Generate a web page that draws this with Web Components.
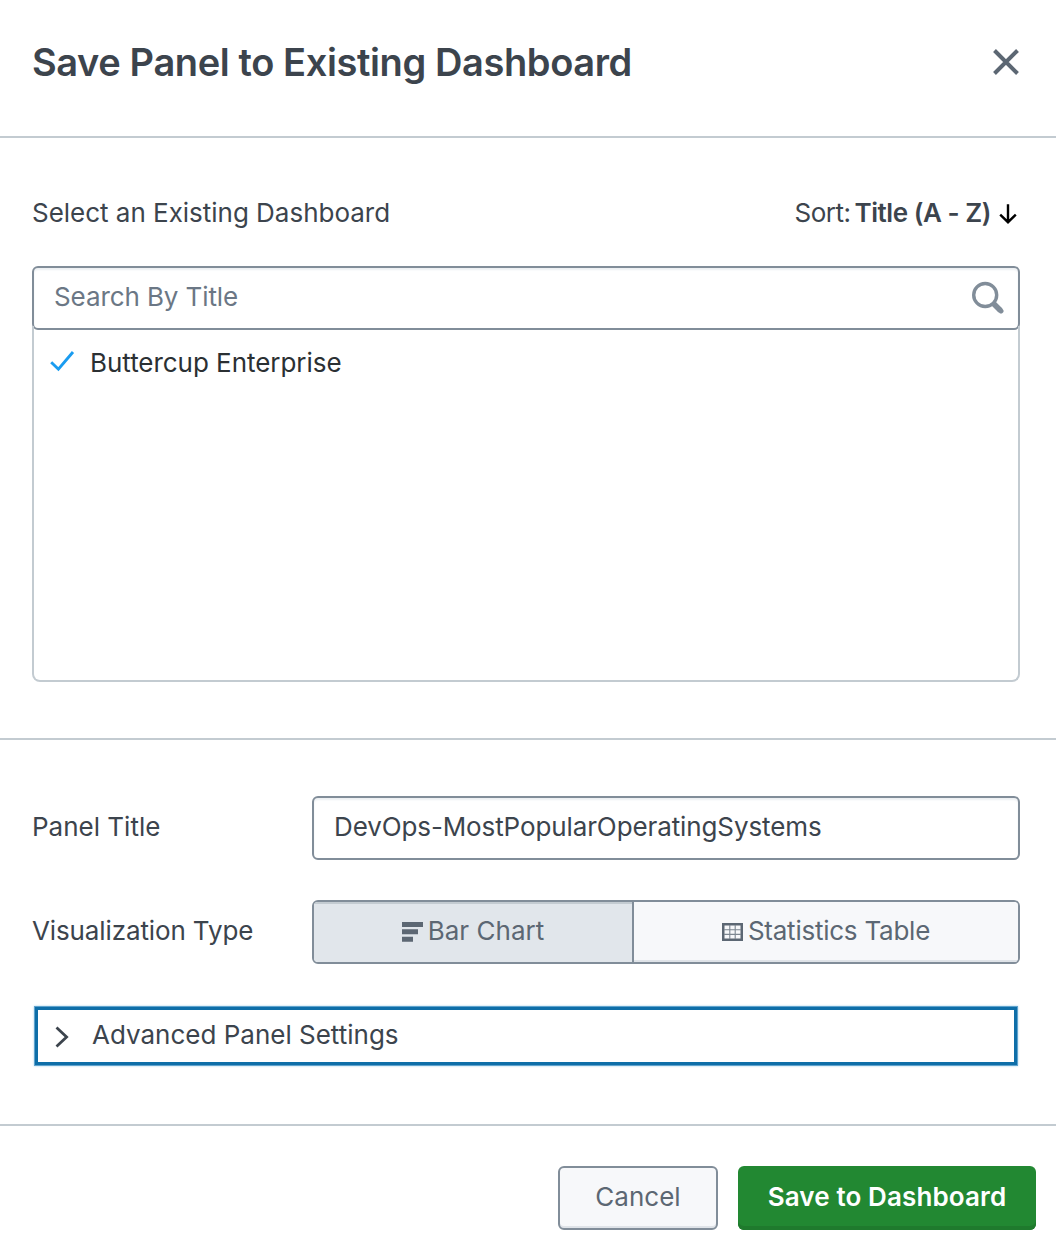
<!DOCTYPE html>
<html lang="en">
<head>
<meta charset="utf-8">
<title>Save Panel to Existing Dashboard</title>
<style>
html, body { margin: 0; background: #fff; }
body { font: 400 26px/32px Inter, "Liberation Sans", sans-serif; color: #3c444d; }
</style>
</head>
<body>
<save-dialog>
  <dialog-header slot="header">Save Panel to Existing Dashboard</dialog-header>
  <dialog-section slot="section" style="--h:602px; --pad:59px 36px 0 32px">
    <list-heading>Select an Existing Dashboard</list-heading>
    <search-field>Search By Title</search-field>
    <option-list><option-row>Buttercup Enterprise</option-row></option-list>
  </dialog-section>
  <dialog-section slot="section" style="--h:386px; --pad:56px 36px 0 32px">
    <form-row label="Panel Title" style="--ls:0px"><text-field>DevOps-MostPopularOperatingSystems</text-field></form-row>
    <form-row label="Visualization Type" style="--ls:-.12px">
      <button-group>
        <toggle-button icon="bars" selected style="width:320px; --ls:.02px">Bar Chart</toggle-button>
        <toggle-button icon="table" style="flex:1; --ls:-.24px">Statistics Table</toggle-button>
      </button-group>
    </form-row>
    <collapsible-panel>Advanced Panel Settings</collapsible-panel>
  </dialog-section>
  <action-button slot="actions" style="width:160px; --ls:0px">Cancel</action-button>
  <action-button slot="actions" primary style="width:298px; --ls:.12px">Save to Dashboard</action-button>
</save-dialog>

<script>
const define = (name, html) => {
  const template = document.createElement('template');
  template.innerHTML = html;
  customElements.define(name, class extends HTMLElement {
    constructor() {
      super();
      this.attachShadow({ mode: 'open' }).append(template.content.cloneNode(true));
    }
    connectedCallback() {
      const label = this.shadowRoot.querySelector('[data-label]');
      if (label) label.textContent = this.getAttribute('label');
      const icon = this.shadowRoot.querySelector('[data-icon]');
      if (icon) icon.innerHTML = ICONS[this.getAttribute('icon')];
    }
  });
};

const ICONS = {
  bars: '<svg width="22" height="20" viewBox="0 0 22 20" fill="#5c6773"><path d="M0 0h21v5H0zM0 7.2h16v5H0zM0 14.7h11v5H0z"/></svg>',
  table: '<svg width="22" height="20" viewBox="0 0 22 20"><path fill="#5c6773" d="M0 1h21v18H0z"/><path fill="#f7f8fa" d="M2.5 3.5h16v13h-16z"/><path fill="none" stroke="#7d8791" stroke-width="1.1" d="M7.8 3v14M13.2 3v14M2 7.8h17M2 12.4h17"/></svg>'
};

define('save-dialog', `<style>
  :host { display: flex; flex-direction: column; height: 1252px; width: 1056px; background: #fff; box-sizing: border-box; }
  footer { display: flex; justify-content: flex-end; gap: 20px; padding: 40px 20px 0; }
</style>
<slot name="header"></slot><slot name="section"></slot><footer><slot name="actions"></slot></footer>`);

define('dialog-header', `<style>
  :host { display: flex; justify-content: space-between; box-sizing: border-box; height: 138px; padding: 38px 36px 0 32px; border-bottom: 2px solid #c3cbd1; }
  h1 { margin: 0; font-size: 38px; line-height: 48px; font-weight: 600; letter-spacing: -.39px; white-space: nowrap; }
  svg { margin-top: 10px; }
</style>
<h1><slot></slot></h1>
<svg width="28" height="28" viewBox="0 0 28 28"><path d="M2.5 2.5l23 23M25.5 2.5L2.5 25.5" fill="none" stroke="#5c6773" stroke-width="4"/></svg>`);

define('dialog-section', `<style>
  :host { display: flex; flex-direction: column; box-sizing: border-box; height: var(--h); padding: var(--pad); border-bottom: 2px solid #c3cbd1; }
</style><slot></slot>`);

define('list-heading', `<style>
  :host { display: flex; height: 32px; margin-bottom: 37px; white-space: nowrap; letter-spacing: -.02px; }
  .push { flex: 1; }
  .sort { letter-spacing: -.5px; }
  b { font-weight: 600; letter-spacing: -.45px; margin-left: 4px; }
  svg { margin: 7px 3px 0 8px; }
</style>
<span><slot></slot></span><span class="push"></span><span class="sort">Sort:</span><b>Title (A - Z)</b>
<svg width="18" height="20" viewBox="0 0 18 20"><path d="M9 .3v17.5M1.2 10.6L9 18.2l7.8-7.6" fill="none" stroke="#000" stroke-width="2.4"/></svg>`);

define('search-field', `<style>
  :host { display: flex; justify-content: space-between; box-sizing: border-box; width: 988px; height: 64px; padding: 13px 13px 0 20px; border: 2px solid #818d99; border-radius: 6px; background: #fff; box-shadow: inset 0 2px 2px #edf0f3; color: #6b7785; letter-spacing: -.1px; }
  svg { margin-top: -1px; }
</style>
<span><slot></slot></span>
<svg width="34" height="34" viewBox="0 0 34 34" fill="none" stroke="#818d99"><circle cx="14.2" cy="15" r="11.5" stroke-width="3.4"/><path d="M22 23l7.5 7.4" stroke-width="5.6"/><path d="M29 29.9l1 1" stroke-width="5" stroke-linecap="round"/></svg>`);

define('option-list', `<style>
  :host { display: block; box-sizing: border-box; height: 356px; margin-top: -4px; padding-top: 20px; border: 2px solid #c3cbd1; border-top: 0; border-radius: 0 0 8px 8px; }
</style><slot></slot>`);

define('option-row', `<style>
  :host { display: flex; gap: 15px; padding-left: 16px; height: 34px; color: #2b3033; letter-spacing: -.04px; line-height: 33px; }
  svg { margin-top: 4px; }
</style>
<svg width="25" height="24" viewBox="0 0 25 24"><path d="M1.2 12.2l7.2 7L23 2" fill="none" stroke="#1a9cf0" stroke-width="2.9"/></svg><span><slot></slot></span>`);

define('form-row', `<style>
  :host { display: flex; height: 64px; margin-bottom: 40px; }
  label { width: 280px; padding-top: 15px; white-space: nowrap; letter-spacing: var(--ls); }
</style><label data-label></label><slot></slot>`);

define('text-field', `<style>
  :host { display: block; box-sizing: border-box; width: 708px; height: 64px; padding: 13px 20px; border: 2px solid #818d99; border-radius: 6px; box-shadow: inset 0 2px 2px #edf0f3; letter-spacing: -.11px; }
</style><slot></slot>`);

define('button-group', `<style>
  :host { display: flex; box-sizing: border-box; width: 708px; height: 64px; border: 2px solid #818d99; border-radius: 6px; overflow: hidden; }
</style><slot></slot>`);

define('toggle-button', `<style>
  :host { display: flex; justify-content: center; box-sizing: border-box; padding-top: 13px; gap: 4px; color: #5c6773; background: #f7f8fa; box-shadow: inset 0 -2px #dfe3e8; letter-spacing: var(--ls); }
  :host([selected]) { background: #e1e6eb; box-shadow: inset 0 2px #c3cbd1; border-right: 2px solid #818d99; }
  span { white-space: nowrap; }
  i { display: block; height: 20px; padding-top: 7px; }
  svg { display: block; }
</style><i data-icon></i><span><slot></slot></span>`);

define('collapsible-panel', `<style>
  :host { display: flex; gap: 23px; box-sizing: border-box; width: 982px; height: 58px; margin: 3px 0 0 3px; padding: 9px 0 0 17px; border: 3px solid #0e6ea8; box-shadow: 0 0 0 1px #5fa3ce, 0 0 2px 1px #a9d3ea; }
  svg { margin-top: 7px; }
</style>
<svg width="14" height="22" viewBox="0 0 14 22"><path d="M1.5 1.5L11.6 11 1.5 20.5" fill="none" stroke="#3c444d" stroke-width="2.8"/></svg><span><slot></slot></span>`);

define('action-button', `<style>
  :host { display: flex; justify-content: center; box-sizing: border-box; height: 64px; padding-top: 13px; border: 2px solid #818d99; border-radius: 6px; background: #f7f8fa; box-shadow: inset 0 -2px #dfe3e8; color: #5c6773; letter-spacing: var(--ls); white-space: nowrap; }
  :host([primary]) { padding-top: 15px; border: 0; background: #228832; box-shadow: inset 0 -4px #1f7a2d; color: #fff; font-weight: 600; }
</style><slot></slot>`);
</script>
</body>
</html>
